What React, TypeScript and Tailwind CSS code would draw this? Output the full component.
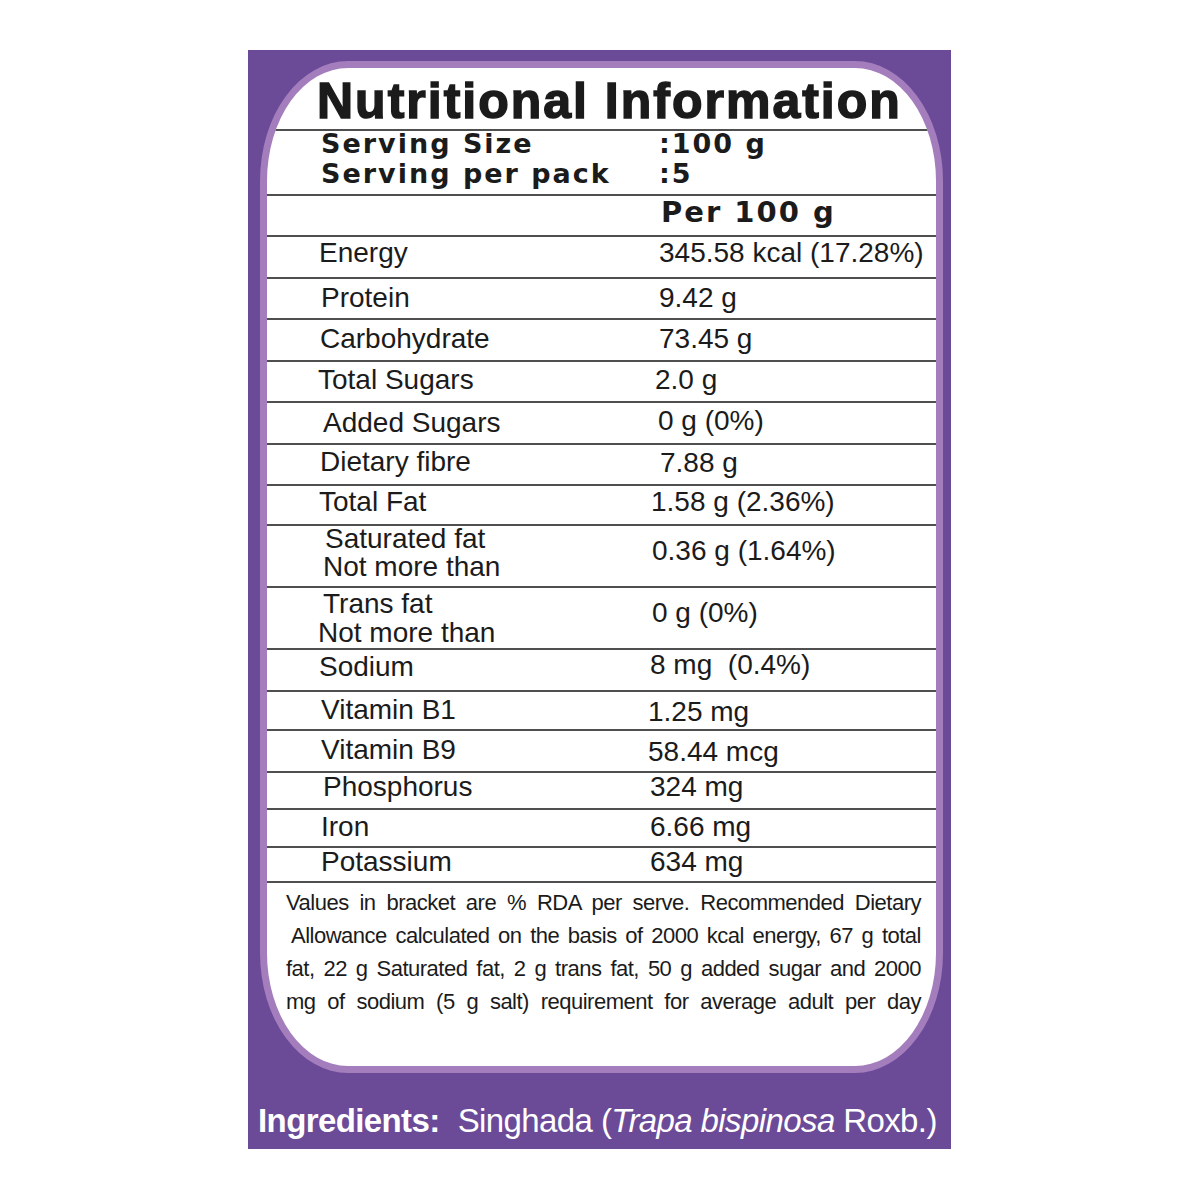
const sans = "[font-family:'Liberation_Sans',Arial,sans-serif]";
const wide = "[font-family:'DejaVu_Sans',Verdana,sans-serif]";

type Row = {
  label: string[];
  value: string;
  h: string;
  lp: string;
  lb: string;
  vp: string;
  vb: string;
  lead: string;
};

const rows: Row[] = [
  { label: ["Energy"], value: "345.58 kcal (17.28%)", h: "h-[42px]", lp: "pl-[52px]", lb: "pb-[10px]", vp: "pl-[12px]", vb: "pb-[10px]", lead: "leading-[28px]" },
  { label: ["Protein"], value: "9.42 g", h: "h-[41px]", lp: "pl-[54px]", lb: "pb-[6px]", vp: "pl-[12px]", vb: "pb-[6px]", lead: "leading-[28px]" },
  { label: ["Carbohydrate"], value: "73.45 g", h: "h-[42px]", lp: "pl-[53px]", lb: "pb-[7px]", vp: "pl-[12px]", vb: "pb-[7px]", lead: "leading-[28px]" },
  { label: ["Total Sugars"], value: "2.0 g", h: "h-[41px]", lp: "pl-[51px]", lb: "pb-[7px]", vp: "pl-[8px]", vb: "pb-[7px]", lead: "leading-[28px]" },
  { label: ["Added Sugars"], value: "0 g (0%)", h: "h-[42px]", lp: "pl-[56px]", lb: "pb-[6px]", vp: "pl-[11px]", vb: "pb-[8px]", lead: "leading-[28px]" },
  { label: ["Dietary fibre"], value: "7.88 g", h: "h-[41px]", lp: "pl-[53px]", lb: "pb-[8px]", vp: "pl-[13px]", vb: "pb-[7px]", lead: "leading-[28px]" },
  { label: ["Total Fat"], value: "1.58 g (2.36%)", h: "h-[40px]", lp: "pl-[52px]", lb: "pb-[8px]", vp: "pl-[4px]", vb: "pb-[8px]", lead: "leading-[28px]" },
  { label: ["Saturated fat", "Not more than"], value: "0.36 g (1.64%)", h: "h-[62px]", lp: "pl-[58px]", lb: "pb-[5px]", vp: "pl-[5px]", vb: "pb-[21px]", lead: "leading-[28px]" },
  { label: ["Trans fat", "Not more than"], value: "0 g (0%)", h: "h-[62px]", lp: "pl-[56px]", lb: "pb-[1px]", vp: "pl-[5px]", vb: "pb-[21px]", lead: "leading-[29px]" },
  { label: ["Sodium"], value: "8 mg  (0.4%)", h: "h-[42px]", lp: "pl-[52px]", lb: "pb-[9px]", vp: "pl-[3px]", vb: "pb-[11px]", lead: "leading-[28px]" },
  { label: ["Vitamin B1"], value: "1.25 mg", h: "h-[39px]", lp: "pl-[54px]", lb: "pb-[5px]", vp: "pl-[1px]", vb: "pb-[3px]", lead: "leading-[28px]" },
  { label: ["Vitamin B9"], value: "58.44 mcg", h: "h-[42px]", lp: "pl-[54px]", lb: "pb-[7px]", vp: "pl-[1px]", vb: "pb-[5px]", lead: "leading-[28px]" },
  { label: ["Phosphorus"], value: "324 mg", h: "h-[37px]", lp: "pl-[56px]", lb: "pb-[7px]", vp: "pl-[3px]", vb: "pb-[7px]", lead: "leading-[28px]" },
  { label: ["Iron"], value: "6.66 mg", h: "h-[38px]", lp: "pl-[54px]", lb: "pb-[5px]", vp: "pl-[3px]", vb: "pb-[5px]", lead: "leading-[28px]" },
  { label: ["Potassium"], value: "634 mg", h: "h-[35px]", lp: "pl-[54px]", lb: "pb-[5px]", vp: "pl-[3px]", vb: "pb-[5px]", lead: "leading-[28px]" },
];

const note = [
  "Values in bracket are % RDA per serve. Recommended Dietary",
  "Allowance calculated on the basis of 2000 kcal energy, 67 g total",
  "fat, 22 g Saturated fat, 2 g trans fat, 50 g added sugar and 2000",
  "mg of sodium (5 g salt) requirement for average adult per day",
];

export default function App() {
  return (
    <div className="w-[1200px] h-[1200px] bg-white pt-[50px] pl-[248px]">
      <div className="w-[703px] h-[1099px] bg-[#6b4a98] flex flex-col">
        {/* label panel */}
        <div className="mt-[11px] ml-[12px] w-[683px] h-[1012px] rounded-[88px/120px] border-[7px] border-[#a47dbd] bg-white overflow-hidden text-[#1b1b1b] flex flex-col">
          <div className="h-[63px] shrink-0 flex items-end border-b-2 border-[#4f4f4f] pl-[50px] pb-[3px]">
            <h1 className={`${sans} text-[50px] leading-[50px] font-bold tracking-[2px] [-webkit-text-stroke:1.5px_#1b1b1b]`}>
              Nutritional Information
            </h1>
          </div>

          <div className={`h-[65px] shrink-0 border-b-2 border-[#4f4f4f] flex ${wide} font-bold text-[27px] leading-[30px] tracking-[2px]`}>
            <div className="w-[392px] shrink-0 pl-[54px] -mt-[2px]">
              <div>Serving Size</div>
              <div>Serving per pack</div>
            </div>
            <div className="-mt-[2px]">
              <div>:100 g</div>
              <div>:5</div>
            </div>
          </div>

          <div className={`h-[41px] shrink-0 border-b-2 border-[#4f4f4f] flex items-end pl-[394px] pb-[8px] ${wide} font-bold text-[29px] leading-[29px] tracking-[2px]`}>
            Per 100 g
          </div>

          {rows.map((r) => (
            <div key={r.label[0]} className={`${r.h} shrink-0 border-b-2 border-[#4f4f4f] flex items-end ${sans} text-[28px]`}>
              <div className={`w-[380px] shrink-0 ${r.lp} ${r.lb} ${r.lead}`}>
                {r.label.map((l, i) => (
                  <div key={l} className={i === 1 && r.label[0] === "Trans fat" ? "-ml-[5px]" : i === 1 ? "-ml-[2px]" : ""}>
                    {l}
                  </div>
                ))}
              </div>
              <div className={`${r.vp} ${r.vb} leading-[28px] whitespace-pre`}>{r.value}</div>
            </div>
          ))}

          <div className={`flex-1 pt-[3px] pl-[19px] pr-[15px] ${sans} text-[22px] leading-[33px] tracking-[-0.5px]`}>
            {note.map((line, i) => (
              <div key={i} className={`text-justify [text-align-last:justify] ${i === 1 ? "pl-[5px]" : ""}`}>
                {line}
              </div>
            ))}
          </div>
        </div>

        {/* ingredients */}
        <div className={`flex-1 flex items-end pl-[10px] pb-[12px] ${sans} text-white text-[33px] leading-[33px] tracking-[-0.6px]`}>
          <span className="font-bold">Ingredients:</span>
          <span className="ml-[18px]">
            Singhada (<i>Trapa bispinosa</i> Roxb.)
          </span>
        </div>
      </div>
    </div>
  );
}
